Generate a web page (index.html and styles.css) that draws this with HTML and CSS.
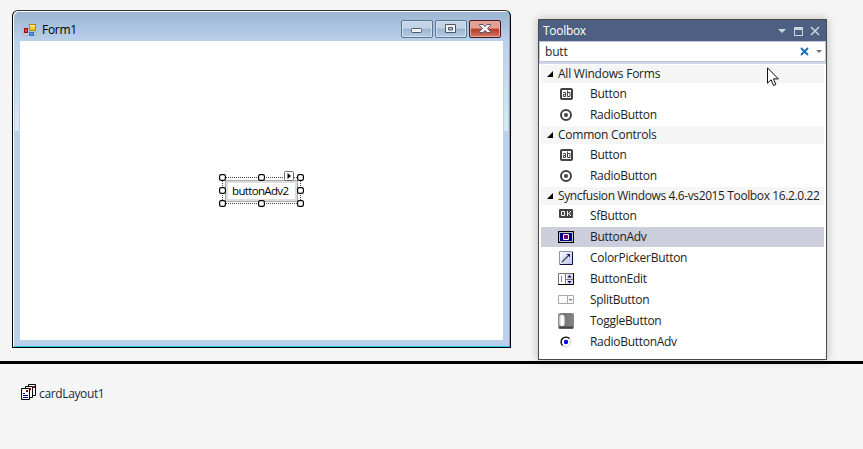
FILE: index.html
```html
<!DOCTYPE html>
<html lang="en">
<head>
<meta charset="utf-8">
<title>Form1 designer</title>
<link rel="stylesheet" href="styles.css">
</head>
<body>
<svg width="0" height="0" class="defs">
  <defs>
    <symbol id="button" viewBox="0 0 16 16"><rect x="3" y="3" width="11" height="10" rx="1" fill="#fff" stroke="#424242" stroke-width="2"/><path d="M5 6.500h2.500V10.500H5.500V8.500h2M9.500 4.500v6h2.500v-4h-2.500" fill="none" stroke="#424242"/></symbol>
    <symbol id="radio" viewBox="0 0 16 16"><circle cx="8" cy="8" r="5" fill="#fff" stroke="#424242" stroke-width="2"/><circle cx="8" cy="8" r="2" fill="#424242"/></symbol>
  </defs>
</svg>
<main class="designer">
  <section class="surface">
    <div class="form">
      <header class="form-title">
        <svg class="form-icon" width="14" height="14" viewBox="0 0 14 14"><path d="M0 .5h5M.5 0v13M0 12.500h5M10 12.500h3.500V8" fill="none" stroke="#b9b9b9"/><rect x="6.500" y="1.500" width="6" height="6" fill="#f8c728" stroke="#b8860b"/><path d="M7 2h5v2H7z" fill="#ffe58a"/><rect x="1.500" y="5.500" width="3" height="4" fill="#d44" stroke="#a01010"/><rect x="6.500" y="9.500" width="4" height="3" fill="#5c94e8" stroke="#3b6bc4"/></svg>
        <span class="form-name">Form1</span>
        <div class="captions">
          <span class="cap"><svg width="30" height="16"><rect x="9.500" y="7.500" width="10" height="4" rx="1" fill="#f4f4f4" stroke="#535666"/></svg></span>
          <span class="cap"><svg width="30" height="16"><path fill-rule="evenodd" d="M9.500 3.500h10v8h-10zM12.500 6.500v2.500h4V6.500z" fill="#f4f4f4" stroke="#535666"/></svg></span>
          <span class="cap close"><svg width="30" height="16"><path d="M9.500 3.500h3.500l2 2 2-2h3.500v1L17.500 7.500l3 3v1H17l-2-2-2 2H9.500v-1l3-3-3-3z" fill="#f4f4f4" stroke="#535666"/></svg></span>
        </div>
      </header>
      <div class="client">
        <div class="selection">
          <div class="button-adv">buttonAdv2</div>
          <svg class="handles" width="85" height="38" viewBox="0 0 85 38">
            <path d="M3 8.500h79M3 34.500h79M3.500 8v27M81.500 8v27" fill="none" stroke="#444" stroke-dasharray="1 1"/>
            <g fill="#fff" stroke="#000" stroke-width="1.200">
              <rect x=".6" y="5.600" width="5.800" height="5.800" rx="1.600"/><rect x="39.600" y="5.600" width="5.800" height="5.800" rx="1.600"/><rect x="78.600" y="5.600" width="5.800" height="5.800" rx="1.600"/>
              <rect x=".6" y="18.600" width="5.800" height="5.800" rx="1.600"/><rect x="78.600" y="18.600" width="5.800" height="5.800" rx="1.600"/>
              <rect x=".6" y="31.600" width="5.800" height="5.800" rx="1.600"/><rect x="39.600" y="31.600" width="5.800" height="5.800" rx="1.600"/><rect x="78.600" y="31.600" width="5.800" height="5.800" rx="1.600"/>
            </g>
            <rect x="65.500" y="2.500" width="9" height="9" rx="1" fill="#fff" stroke="#6d6d5d"/><path d="M68.500 4v6l3.500-3z"/>
          </svg>
        </div>
      </div>
    </div>
  </section>
  <section class="tray">
    <svg width="15" height="17" viewBox="0 0 15 17"><g fill="#fff" stroke="#000"><path d="M7.500.5h7v11h-7z"/><path d="M4.500 2.500h7v11h-7z"/><path d="M.5 4.500h8v11h-8z"/></g><path d="M5 6h2v2H5zM9 4h1v2H9zM12 2h2v2h-2z" fill="#900"/><path d="M2 9.500h2M2 11.500h5M2 13.500h5" stroke="#000080"/></svg>
    <span class="tray-name">cardLayout1</span>
  </section>
</main>

<aside class="toolbox">
  <header class="tb-title"><span class="tb-name">Toolbox</span>
    <svg width="45" height="14" viewBox="0 0 45 14"><path d="M0 5h8L4 9z" fill="#ced4dd"/><path fill-rule="evenodd" d="M16 3h9v9h-9zM17 6v5h7V6z" fill="#ced4dd"/><path d="M33 3l8 8M41 3l-8 8" stroke="#ced4dd" stroke-width="1.500"/></svg>
  </header>
  <div class="search"><span class="query">butt</span>
    <svg width="24" height="12" viewBox="0 0 24 12"><path d="M1 2l7 7M8 2L1 9" stroke="#0e70c0" stroke-width="1.800"/><path d="M16 4h6l-3 3z" fill="#717171"/></svg>
  </div>
  <div class="list">
    <section class="group">
      <h2><svg width="6" height="6"><path d="M6 0v6H0z"/></svg><span class="short">All Windows Forms</span></h2>
      <div class="item"><svg width="16" height="16"><use href="#button"/></svg><span>Button</span></div>
      <div class="item"><svg width="16" height="16"><use href="#radio"/></svg><span>RadioButton</span></div>
    </section>
    <section class="group">
      <h2><svg width="6" height="6"><path d="M6 0v6H0z"/></svg><span class="short">Common Controls</span></h2>
      <div class="item"><svg width="16" height="16"><use href="#button"/></svg><span>Button</span></div>
      <div class="item"><svg width="16" height="16"><use href="#radio"/></svg><span>RadioButton</span></div>
    </section>
    <section class="group">
      <h2><svg width="6" height="6"><path d="M6 0v6H0z"/></svg><span class="long">Syncfusion Windows 4.6-vs2015 Toolbox 16.2.0.22</span></h2>
      <div class="item"><svg width="16" height="16"><rect x="1" y="1" width="14" height="9" rx="1" fill="#424242"/><path d="M3.500 3.500h3v4h-3zM9.500 3v5M12.500 3v1l-2 1.500 2 1.500v1" fill="none" stroke="#fff"/></svg><span>SfButton</span></div>
      <div class="item selected"><svg width="16" height="16"><path d="M0 2h16v12H0z"/><path d="M1.500 3.500h13v9h-13z" fill="#000080" stroke="#c8c8c8"/><path d="M5.500 5.500h5v5h-5z" fill="#800080" stroke="#fff"/></svg><span>ButtonAdv</span></div>
      <div class="item"><svg width="16" height="16"><defs><linearGradient id="cp" x2="1" y2="1"><stop stop-color="#fff"/><stop offset="1" stop-color="#b8c4e4"/></linearGradient></defs><path d="M1.500 1.500h13v13h-13z" fill="url(#cp)" stroke="#8a94b0"/><path d="M14.500 2v12.500H2" fill="none" stroke="#101040"/><path d="M4 12l6-6" stroke="#444b70" stroke-width="1.500"/><path d="M8.500 4H12v3.500z" fill="#101040"/></svg><span>ColorPickerButton</span></div>
      <div class="item"><svg width="16" height="16"><path d="M.5 2.500h15v11H.5z" fill="#fff" stroke="#777"/><path d="M3.500 5v6" stroke="#888"/><path d="M9 3h6v5H9zM9 9h6v4H9z" fill="#ddd"/><path d="M7.500 2v12M8 8.500h7" stroke="#777"/><path d="M9.500 6.500h4l-2-2.500zM9.500 10h4l-2 2.500z" fill="#000080"/><path d="M0 13.500h15.500V2" fill="none" stroke="#000"/></svg><span>ButtonEdit</span></div>
      <div class="item"><svg width="16" height="16"><path d="M.5 3.500h15v8H.5zM9.500 4v8" fill="#fafafa" stroke="#aaa"/><path d="M10.500 7h4l-2 2z" fill="#777"/></svg><span>SplitButton</span></div>
      <div class="item"><svg width="16" height="16"><defs><linearGradient id="tg"><stop stop-color="#999"/><stop offset=".4" stop-color="#777"/><stop offset="1" stop-color="#858585"/></linearGradient><linearGradient id="tw"><stop stop-color="#aaa"/><stop offset=".4" stop-color="#fff"/><stop offset=".7" stop-color="#fff"/><stop offset="1" stop-color="#aaa"/></linearGradient></defs><rect width="16" height="16" rx="2" fill="url(#tg)"/><path d="M1 14.500h14" stroke="#444" stroke-width="2"/><rect x="1" y="2" width="6" height="11" rx="2.500" fill="url(#tw)"/></svg><span>ToggleButton</span></div>
      <div class="item"><svg width="16" height="16"><circle cx="8" cy="8" r="4.800" fill="#fff" stroke="#ccc"/><path d="M4.500 11.500A4.800 4.800 0 0 1 11.500 4.500" fill="none" stroke="#000" stroke-width="1.300"/><circle cx="8" cy="8" r="2.200" fill="#00f"/></svg><span>RadioButtonAdv</span></div>
    </section>
  </div>
</aside>
<svg class="cursor" width="12" height="20" viewBox="0 0 12 20"><path d="M.5.8v15.400l3.600-3.400 2.500 5.700 2.300-1-2.500-5.600h5z" fill="#fff" stroke="#111"/></svg>
</body>
</html>
```
FILE: styles.css
```css
* { box-sizing: border-box; }
body { margin: 0; width: 863px; height: 449px; overflow: hidden; background: #f5f5f5; color: #1e1e1e; font: 12px "Open Sans", "Noto Sans", sans-serif; }
svg { display: block; flex: none; }
span { white-space: nowrap; }
.defs { position: absolute; }
.designer { display: flex; flex-direction: column; height: 449px; }
.surface { height: 364px; padding: 10px 12px; border-bottom: 3px solid #000; }
.form {
  display: flex; flex-direction: column; width: 499px; height: 338px;
  border: 1px solid #000; border-top-color: #333; border-radius: 6px 6px 0 0; padding: 0 6px 7px;
  background:
    linear-gradient(#b9d1ea, #dde8f5) 2px 30px / 4px 90px no-repeat,
    linear-gradient(#b9d1ea, #dde8f5) 491px 30px / 4px 90px no-repeat,
    linear-gradient(#9ab4d2, #b9d1ea 30px, #b9d1ea);
  box-shadow: inset 1px 1px #fff, inset -1px -1px #21c9e8;
}
.form-title { display: flex; align-items: flex-start; height: 30px; padding: 5px 3px 0 4px; }
.form-icon { margin: 7px 5px 0 0; }
.form-name { margin-top: 5px; color: #000; line-height: 17px; letter-spacing: -.3px; }
.captions { display: flex; gap: 2px; margin: 4px 0 0 auto; }
.cap { width: 32px; height: 18px; border: 1px solid #5d7690; border-radius: 2px; background: linear-gradient(#c3d4e7 45%, #9bb5d2 50%, #b5cde5); box-shadow: inset 0 0 0 1px #d2e0ee; }
.close { border-color: #4a1420; background: linear-gradient(#e2a095 45%, #b83a25 50%, #cf7764); box-shadow: inset 0 0 0 1px #e5aaa0; }
.client { flex: 1; margin: 0 1px; background: #fff; padding: 128px 0 0 199px; }
.selection { position: relative; width: 85px; height: 38px; padding: 11px 0 0 6px; }
.button-adv { width: 73px; height: 22px; border: 3px solid #ddd; outline: 1px solid #aaa; outline-offset: -1px; background: #fff; color: #000; font-size: 11.5px; line-height: 15px; padding-left: 4px; letter-spacing: -.65px; white-space: nowrap; }
.handles { position: absolute; left: 0; top: 0; }
.tray { display: flex; padding: 20px 0 0 21px; color: #1b293e; }
.tray-name { margin: 1px 0 0 3px; line-height: 17px; letter-spacing: -.36px; }
.toolbox { position: absolute; left: 538px; top: 19px; width: 289px; height: 341px; border: 1px solid #4b4b4b; background: #fff; box-shadow: 0 0 9px rgba(0,0,0,.25); }
.tb-title { display: flex; align-items: center; justify-content: space-between; height: 21px; padding: 0 3px 0 4px; background: #4d6082; color: #fff; }
.tb-name { letter-spacing: -.3px; }
.search { display: flex; align-items: center; justify-content: space-between; height: 21px; padding: 0 1px 0 5px; border: 1px solid #bcc6d8; }
.query { letter-spacing: -.2px; }
.list { border-top: 2px solid #cfd6e5; padding: 1px 2px 0; }
h2 { display: flex; align-items: center; height: 18px; margin: 0 0 1px; padding-left: 6px; gap: 5px; background: #f5f5f5; font: inherit; line-height: 17px; }
h2 span { padding-bottom: 1px; }
.short { letter-spacing: -.23px; }
.long { letter-spacing: -.38px; }
.item { display: flex; align-items: center; height: 20px; margin-bottom: 1px; padding-left: 17px; gap: 16px; }
.item span { line-height: 17px; padding-bottom: 2px; letter-spacing: -.29px; }
.selected { background: #cccedb; }
.cursor { position: absolute; left: 767px; top: 67px; }
```
